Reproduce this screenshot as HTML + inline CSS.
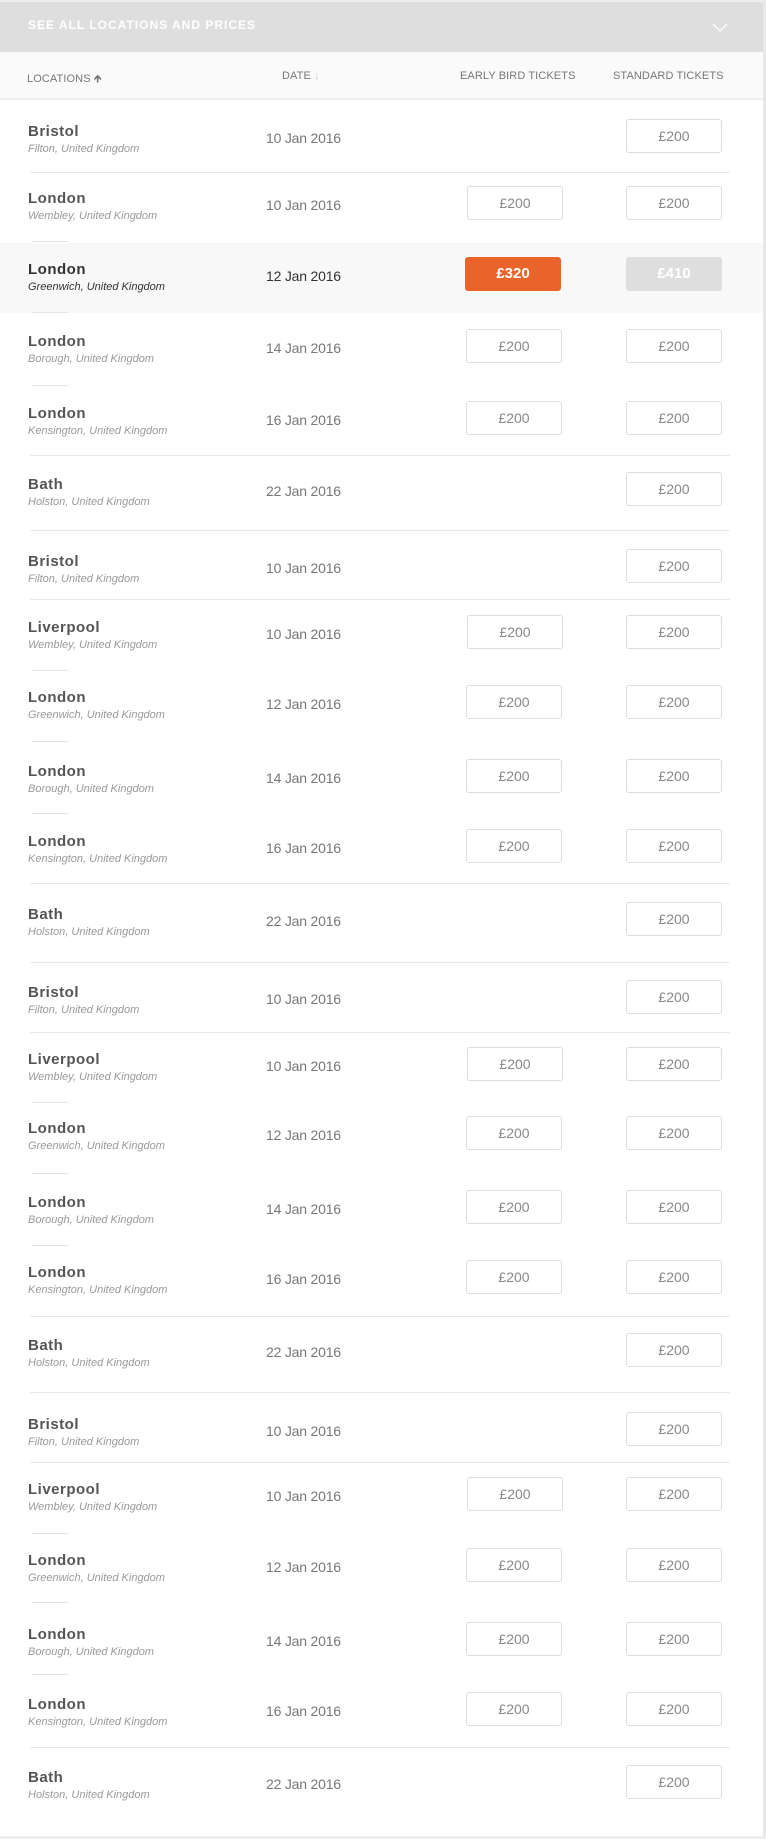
<!DOCTYPE html>
<html><head><meta charset="utf-8"><style>
*{margin:0;padding:0;box-sizing:border-box}
body{width:766px;height:1839px;background:#fff;font-family:"Liberation Sans",sans-serif;position:relative;overflow:hidden}
.strip{position:absolute;right:0;top:0;width:3px;height:1839px;background:#e8e8e8}
.top{position:absolute;left:0;top:0;width:766px;height:2px;background:#eee}
.bar{position:absolute;left:0;top:2px;width:763px;height:50px;background:#dedede}
.bar span{position:absolute;left:28px;top:16px;color:#fff;font-size:12px;font-weight:bold;letter-spacing:1px}
.bar svg{position:absolute;left:712px;top:21px}
.hd{position:absolute;left:0;top:52px;width:763px;height:48px;background:#fafafa;border-bottom:2px solid #f0f0f0}
.hd span{position:absolute;top:18px;font-size:11px;color:#777;letter-spacing:0.1px}
.r{position:absolute;left:0;width:763px;height:0}
.n{position:absolute;left:28px;top:-15px;font-size:15px;font-weight:bold;color:#555;letter-spacing:0.5px}
.s{position:absolute;left:28px;top:5px;font-size:11px;font-style:italic;color:#999;white-space:nowrap}
.d{position:absolute;left:266px;top:-8px;font-size:14px;color:#777;letter-spacing:-0.2px}
.b{position:absolute;top:-19px;width:96px;height:34px;border:1px solid #ddd;border-radius:3px;text-align:center;line-height:32px;font-size:14px;color:#888;background:#fff}
.e{left:466px}.t{left:626px}
.hl{position:absolute;left:0;top:243px;width:763px;height:70px;background:#f8f8f8}
.fl{position:absolute;left:30px;width:700px;height:1px;background:#e8e8e8}
.sl{position:absolute;left:32px;width:36px;height:1px;background:#e3e3e3}
.bot{position:absolute;left:0;top:1836px;width:766px;height:3px;background:#eee}
</style></head><body>
<div class="top"></div>
<div class="bar"><span>SEE ALL LOCATIONS AND PRICES</span><svg width="16" height="10" viewBox="0 0 16 10"><path d="M1 1 L8 8 L15 1" fill="none" stroke="#fff" stroke-width="1.3"/></svg></div>
<div class="hd"><span style="left:27px">LOCATIONS &#129145;</span><span style="left:282px">DATE <span style="position:static;color:#ccc">&#8595;</span></span><span style="left:460px">EARLY BIRD TICKETS</span><span style="left:613px">STANDARD TICKETS</span></div>
<div class="hl"></div>
<div class="fl" style="top:172px"></div><div class="sl" style="top:241px"></div><div class="sl" style="top:312px"></div><div class="sl" style="top:385px"></div>
<div class="fl" style="top:455px"></div><div class="fl" style="top:530px"></div><div class="fl" style="top:599px"></div>
<div class="sl" style="top:670px"></div><div class="sl" style="top:741px"></div><div class="sl" style="top:813px"></div>
<div class="fl" style="top:883px"></div><div class="fl" style="top:962px"></div><div class="fl" style="top:1032px"></div>
<div class="sl" style="top:1102px"></div><div class="sl" style="top:1173px"></div><div class="sl" style="top:1245px"></div>
<div class="fl" style="top:1316px"></div><div class="fl" style="top:1392px"></div><div class="fl" style="top:1462px"></div>
<div class="sl" style="top:1533px"></div><div class="sl" style="top:1602px"></div><div class="sl" style="top:1674px"></div>
<div class="fl" style="top:1747px"></div>

<div class="r" style="top:138px"><div class="n">Bristol</div><div class="s">Filton, United Kingdom</div><div class="d">10 Jan 2016</div><div class="b t">£200</div></div>
<div class="r" style="top:205px"><div class="n">London</div><div class="s">Wembley, United Kingdom</div><div class="d">10 Jan 2016</div><div class="b e" style="left:467px">£200</div><div class="b t">£200</div></div>
<div class="r" style="top:276px"><div class="n" style="color:#333">London</div><div class="s" style="color:#333">Greenwich, United Kingdom</div><div class="d" style="color:#333">12 Jan 2016</div><div class="b e" style="left:465px;background:#e8642a;border-color:#e8642a;color:#fff;font-weight:bold;font-size:15px">£320</div><div class="b t" style="background:#dedede;border-color:#dedede;color:#fff;font-weight:bold;font-size:15px">£410</div></div>
<div class="r" style="top:348px"><div class="n">London</div><div class="s">Borough, United Kingdom</div><div class="d">14 Jan 2016</div><div class="b e">£200</div><div class="b t">£200</div></div>
<div class="r" style="top:420px"><div class="n">London</div><div class="s">Kensington, United Kingdom</div><div class="d">16 Jan 2016</div><div class="b e">£200</div><div class="b t">£200</div></div>
<div class="r" style="top:491px"><div class="n">Bath</div><div class="s">Holston, United Kingdom</div><div class="d">22 Jan 2016</div><div class="b t">£200</div></div>

<div class="r" style="top:568px"><div class="n">Bristol</div><div class="s">Filton, United Kingdom</div><div class="d">10 Jan 2016</div><div class="b t">£200</div></div>
<div class="r" style="top:634px"><div class="n">Liverpool</div><div class="s">Wembley, United Kingdom</div><div class="d">10 Jan 2016</div><div class="b e" style="left:467px">£200</div><div class="b t">£200</div></div>
<div class="r" style="top:704px"><div class="n">London</div><div class="s">Greenwich, United Kingdom</div><div class="d">12 Jan 2016</div><div class="b e">£200</div><div class="b t">£200</div></div>
<div class="r" style="top:778px"><div class="n">London</div><div class="s">Borough, United Kingdom</div><div class="d">14 Jan 2016</div><div class="b e">£200</div><div class="b t">£200</div></div>
<div class="r" style="top:848px"><div class="n">London</div><div class="s">Kensington, United Kingdom</div><div class="d">16 Jan 2016</div><div class="b e">£200</div><div class="b t">£200</div></div>
<div class="r" style="top:921px"><div class="n">Bath</div><div class="s">Holston, United Kingdom</div><div class="d">22 Jan 2016</div><div class="b t">£200</div></div>

<div class="r" style="top:999px"><div class="n">Bristol</div><div class="s">Filton, United Kingdom</div><div class="d">10 Jan 2016</div><div class="b t">£200</div></div>
<div class="r" style="top:1066px"><div class="n">Liverpool</div><div class="s">Wembley, United Kingdom</div><div class="d">10 Jan 2016</div><div class="b e" style="left:467px">£200</div><div class="b t">£200</div></div>
<div class="r" style="top:1135px"><div class="n">London</div><div class="s">Greenwich, United Kingdom</div><div class="d">12 Jan 2016</div><div class="b e">£200</div><div class="b t">£200</div></div>
<div class="r" style="top:1209px"><div class="n">London</div><div class="s">Borough, United Kingdom</div><div class="d">14 Jan 2016</div><div class="b e">£200</div><div class="b t">£200</div></div>
<div class="r" style="top:1279px"><div class="n">London</div><div class="s">Kensington, United Kingdom</div><div class="d">16 Jan 2016</div><div class="b e">£200</div><div class="b t">£200</div></div>
<div class="r" style="top:1352px"><div class="n">Bath</div><div class="s">Holston, United Kingdom</div><div class="d">22 Jan 2016</div><div class="b t">£200</div></div>

<div class="r" style="top:1431px"><div class="n">Bristol</div><div class="s">Filton, United Kingdom</div><div class="d">10 Jan 2016</div><div class="b t">£200</div></div>
<div class="r" style="top:1496px"><div class="n">Liverpool</div><div class="s">Wembley, United Kingdom</div><div class="d">10 Jan 2016</div><div class="b e" style="left:467px">£200</div><div class="b t">£200</div></div>
<div class="r" style="top:1567px"><div class="n">London</div><div class="s">Greenwich, United Kingdom</div><div class="d">12 Jan 2016</div><div class="b e">£200</div><div class="b t">£200</div></div>
<div class="r" style="top:1641px"><div class="n">London</div><div class="s">Borough, United Kingdom</div><div class="d">14 Jan 2016</div><div class="b e">£200</div><div class="b t">£200</div></div>
<div class="r" style="top:1711px"><div class="n">London</div><div class="s">Kensington, United Kingdom</div><div class="d">16 Jan 2016</div><div class="b e">£200</div><div class="b t">£200</div></div>
<div class="r" style="top:1784px"><div class="n">Bath</div><div class="s">Holston, United Kingdom</div><div class="d">22 Jan 2016</div><div class="b t">£200</div></div>

<div class="strip"></div>
<div class="bot"></div>
</body></html>
